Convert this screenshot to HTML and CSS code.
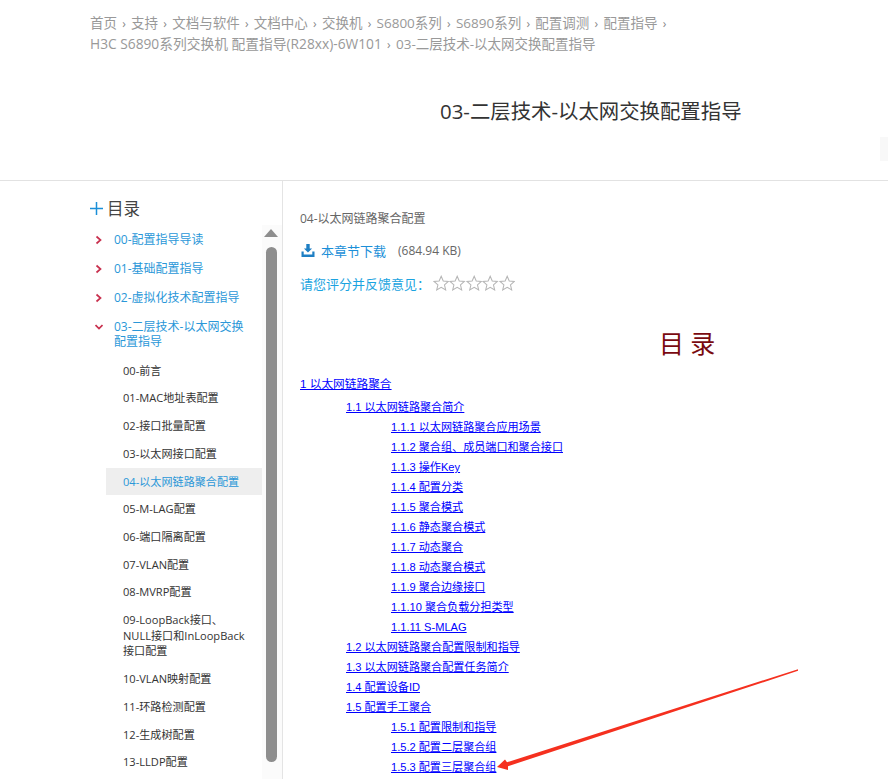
FILE: index.html
```html
<!DOCTYPE html>
<html lang="zh-CN">
<head>
<meta charset="utf-8">
<title>03-二层技术-以太网交换配置指导</title>
<link rel="stylesheet" href="styles.css">
</head>
<body>
<header class="head">
  <nav class="crumbs">
    <a>首页</a><i>›</i><a>支持</a><i>›</i><a>文档与软件</a><i>›</i><a>文档中心</a><i>›</i><a>交换机</a><i>›</i><a>S6800系列</a><i>›</i><a>S6890系列</a><i>›</i><a>配置调测</a><i>›</i><a>配置指导</a><i>›</i><br>
    <a class="crumb-long">H3C S6890系列交换机 配置指导(R28xx)-6W101</a><i>›</i><a>03-二层技术-以太网交换配置指导</a>
  </nav>
  <h1 class="title">03-二层技术-以太网交换配置指导</h1>
  <div class="edge-tab"></div>
</header>
<main class="main">
  <aside class="side">
    <div class="side-title"><svg class="plus" viewBox="0 0 13 13"><path d="M0 6.500H13M6.500 0V13"/></svg>目录</div>
    <div class="side-body">
      <ul class="tree">
        <li class="top"><svg class="chev" viewBox="0 0 8 10"><path d="M1.500 1.500 L5.500 5 L1.500 8.500" /></svg><span>00-配置指导导读</span></li>
        <li class="top"><svg class="chev" viewBox="0 0 8 10"><path d="M1.500 1.500 L5.500 5 L1.500 8.500" /></svg><span>01-基础配置指导</span></li>
        <li class="top"><svg class="chev" viewBox="0 0 8 10"><path d="M1.500 1.500 L5.500 5 L1.500 8.500" /></svg><span>02-虚拟化技术配置指导</span></li>
        <li class="top"><svg class="chev" viewBox="0 0 8 10"><path d="M0.500 3 L4 6.500 L7.500 3" /></svg><span>03-二层技术-以太网交换配置指导</span></li>
        <li class="sub">00-前言</li>
        <li class="sub">01-MAC地址表配置</li>
        <li class="sub">02-接口批量配置</li>
        <li class="sub">03-以太网接口配置</li>
        <li class="sub cur">04-以太网链路聚合配置</li>
        <li class="sub">05-M-LAG配置</li>
        <li class="sub">06-端口隔离配置</li>
        <li class="sub">07-VLAN配置</li>
        <li class="sub">08-MVRP配置</li>
        <li class="sub">09-LoopBack接口、NULL接口和InLoopBack接口配置</li>
        <li class="sub">10-VLAN映射配置</li>
        <li class="sub">11-环路检测配置</li>
        <li class="sub">12-生成树配置</li>
        <li class="sub">13-LLDP配置</li>
      </ul>
      <div class="bar"><div class="bar-up"></div><div class="bar-thumb"></div></div>
    </div>
  </aside>
  <section class="content">
    <p class="chapter">04-以太网链路聚合配置</p>
    <p class="dl">
      <svg class="dl-ic" viewBox="0 0 14 13"><path d="M5.300 0h3.400v4.500h2.400L7 8.600 2.900 4.500h2.400z"/><path d="M0.500 7.500h2.200v3h8.600v-3h2.200v5.500H0.500z"/></svg>
      <a>本章节下载</a><span class="size">(684.94 KB)</span>
    </p>
    <div class="rate">请您评分并反馈意见：<span class="stars">
      <svg class="star" viewBox="0 0 16 16"><path d="M8 1.200l2 4.600 5 .5-3.800 3.300 1.200 4.900L8 12l-4.400 2.500 1.200-4.900L1 6.300l5-.5z"/></svg>
      <svg class="star" viewBox="0 0 16 16"><path d="M8 1.200l2 4.600 5 .5-3.800 3.300 1.200 4.900L8 12l-4.400 2.500 1.200-4.900L1 6.300l5-.5z"/></svg>
      <svg class="star" viewBox="0 0 16 16"><path d="M8 1.200l2 4.600 5 .5-3.800 3.300 1.200 4.900L8 12l-4.400 2.500 1.200-4.900L1 6.300l5-.5z"/></svg>
      <svg class="star" viewBox="0 0 16 16"><path d="M8 1.200l2 4.600 5 .5-3.800 3.300 1.200 4.900L8 12l-4.400 2.500 1.200-4.900L1 6.300l5-.5z"/></svg>
      <svg class="star" viewBox="0 0 16 16"><path d="M8 1.200l2 4.600 5 .5-3.800 3.300 1.200 4.900L8 12l-4.400 2.500 1.200-4.900L1 6.300l5-.5z"/></svg>
    </span></div>
    <h2 class="toc-title">目&nbsp;录</h2>
    <div class="toc">
      <p class="l1"><a>1 以太网链路聚合</a></p>
      <p class="l2 first"><a>1.1 以太网链路聚合简介</a></p>
      <p class="l3"><a>1.1.1 以太网链路聚合应用场景</a></p>
      <p class="l3"><a>1.1.2 聚合组、成员端口和聚合接口</a></p>
      <p class="l3"><a>1.1.3 操作Key</a></p>
      <p class="l3"><a>1.1.4 配置分类</a></p>
      <p class="l3"><a>1.1.5 聚合模式</a></p>
      <p class="l3"><a>1.1.6 静态聚合模式</a></p>
      <p class="l3"><a>1.1.7 动态聚合</a></p>
      <p class="l3"><a>1.1.8 动态聚合模式</a></p>
      <p class="l3"><a>1.1.9 聚合边缘接口</a></p>
      <p class="l3"><a>1.1.10 聚合负载分担类型</a></p>
      <p class="l3"><a>1.1.11 S-MLAG</a></p>
      <p class="l2"><a>1.2 以太网链路聚合配置限制和指导</a></p>
      <p class="l2"><a>1.3 以太网链路聚合配置任务简介</a></p>
      <p class="l2"><a>1.4 配置设备ID</a></p>
      <p class="l2"><a>1.5 配置手工聚合</a></p>
      <p class="l3"><a>1.5.1 配置限制和指导</a></p>
      <p class="l3"><a>1.5.2 配置二层聚合组</a></p>
      <p class="l3"><a>1.5.3 配置三层聚合组</a></p>
    </div>
  </section>
</main>
<svg class="arrow" viewBox="0 0 888 779"><path d="M798 669.200 L507 762.300 L505 759.500 L497 767 L508 770 L508 766.200 L798 670.800 Z"/></svg>
</body>
</html>
```
FILE: styles.css
```css
* { box-sizing: border-box; }
html, body { margin: 0; padding: 0; height: 779px; overflow: hidden; background: #fff; }
body { position: relative; font-family: "Open Sans", "Noto Sans CJK SC", sans-serif; color: #333; }
p, ul, h1, h2 { margin: 0; padding: 0; }

.head { position: relative; height: 181px; border-bottom: 1px solid #e2e2e2; padding: 13px 0 0 90px; }
.crumbs { font-size: 13.500px; line-height: 20px; color: #999; white-space: nowrap; }
.crumbs i { font-style: normal; margin: 0 5.250px; font-size: 12px; color: #888; }
.crumb-long { font-size: 13.750px; }
.title { margin: 42px 0 0 350px; font-size: 20.400px; font-weight: 400; line-height: 28px; color: #333; }
.edge-tab { position: absolute; right: 0; top: 137px; width: 8px; height: 24px; background: #f8f8f8; }

.main { display: flex; height: 598px; padding-left: 90px; }
.side { width: 193px; height: 598px; border-right: 1px solid #e4e4e4; flex: none; }
.side-title { display: flex; align-items: center; height: 28px; margin-top: 13px; font-size: 16.500px; color: #444; }
.plus { width: 13px; height: 13px; margin-right: 4px; fill: none; stroke: #1b8fd8; stroke-width: 1.500; flex: none; }
.side-body { display: flex; margin-top: 3px; height: 560px; }
.tree { list-style: none; width: 172px; flex: none; font-size: 12px; line-height: 15.700px; }
.top { display: flex; padding: 6.500px 0 6.800px 0; color: #2a97d8; }
.top span { width: 135px; margin-left: 11px; }
.chev { width: 8px; height: 10px; margin: 3px 0 0 5px; fill: none; stroke: #c8304e; stroke-width: 1.700; flex: none; }
.sub { margin-left: 16px; padding: 6px 17px 6px 17px; color: #333; font-size: 11.100px; }
.sub.cur { background: #eeeeee; color: #2a97d8; }
.bar { position: relative; width: 20px; background: #fbfbfb; height: 560px; flex: none; }
.bar-up { position: absolute; left: 2px; top: 4px; width: 0; height: 0; border-left: 7px solid transparent; border-right: 7px solid transparent; border-bottom: 8px solid #8e8e8e; }
.bar-thumb { position: absolute; left: 4px; top: 22px; width: 11px; height: 515px; border-radius: 6px; background: #8e8e8e; }

.content { flex: 1; padding: 29px 0 0 17px; min-width: 0; }
.chapter { font-size: 12px; line-height: 18px; color: #666; }
.dl { display: flex; align-items: center; height: 20px; margin-top: 12px; font-size: 13px; color: #1b8fd8; }
.dl-ic { width: 14px; height: 13px; fill: #1e7fc4; margin: 0 6px 0 1px; }
.size { margin-left: 12px; font-size: 12px; color: #666; }
.rate { display: flex; align-items: center; height: 20px; margin-top: 13px; font-size: 13px; color: #1ba3e0; }
.stars { display: flex; margin-left: 3px; }
.star { width: 16.400px; height: 16.400px; fill: #fff; stroke: #b5b5b5; stroke-width: 1; }
.toc-title { margin: 37px 0 0 359px; font-size: 25px; line-height: 30px; font-weight: 400; color: #7a0a10; font-family: "Liberation Serif", "Noto Sans CJK SC", serif; }
.toc { margin-top: 14px; font-family: "Liberation Sans", "Noto Sans CJK SC", sans-serif; font-size: 11.100px; line-height: 20px; }
.toc a { color: #0000ff; text-decoration: underline; }
.l1 { font-size: 11.700px; }
.l2 { padding-left: 46px; }
.l2.first { margin-top: 3px; }
.l3 { padding-left: 91px; }

.arrow { position: absolute; left: 0; top: 0; width: 888px; height: 779px; pointer-events: none; }
.arrow path { fill: #f5301f; }
```
